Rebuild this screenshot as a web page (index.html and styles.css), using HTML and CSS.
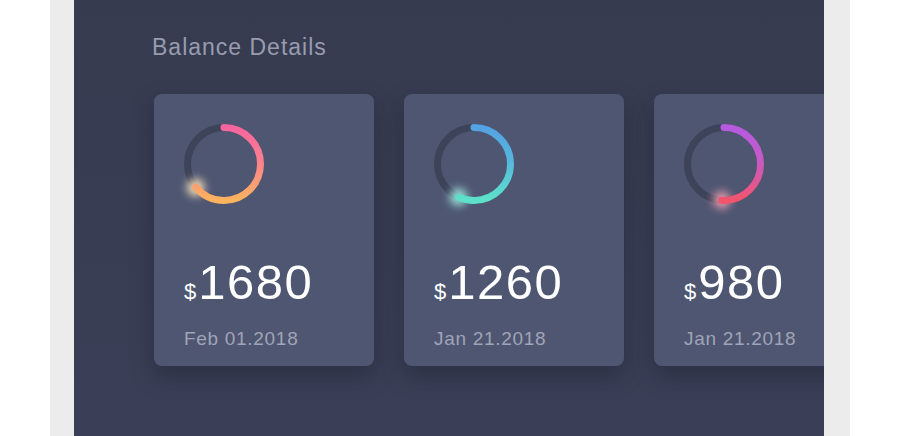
FILE: index.html
```html
<!DOCTYPE html>
<html lang="en">

<head>
    <meta charset="UTF-8">
    <meta name="viewport" content="width=device-width, initial-scale=1.0">
    <title>Balance Details</title>
    <link rel="stylesheet" href="styles.css">
</head>

<body>
    <div id="moldura">
        <div id="painel">
            <h2 id="titulo">Balance Details</h2>
            <div id="lista-cartoes">
                <div class="cartao">
                    <svg class="anel" width="80" height="80" viewBox="0 0 80 80">
                        <defs>
                            <linearGradient id="grad-rosa" x1="0" y1="0" x2="0" y2="1">
                                <stop offset="0" stop-color="#f6659f" />
                                <stop offset="0.45" stop-color="#f98090" />
                                <stop offset="1" stop-color="#fcb35e" />
                            </linearGradient>
                            <filter id="brilho" x="-200%" y="-200%" width="500%" height="500%">
                                <feGaussianBlur stdDeviation="4.5" />
                            </filter>
                        </defs>
                        <circle class="trilho" cx="40" cy="40" r="36.5" />
                        <circle cx="11.8" cy="63.5" r="9" fill="#fde7bd" opacity="0.9" filter="url(#brilho)" />
                        <path class="arco" d="M40 3.5 A36.5 36.5 0 1 1 40 76.5 A36.5 36.5 0 1 1 40 3.5" pathLength="100" stroke="url(#grad-rosa)" stroke-dasharray="64 100" />
                    </svg>
                    <div class="valor"><span class="moeda">$</span>1680</div>
                    <div class="data">Feb 01.2018</div>
                </div>
                <div class="cartao">
                    <svg class="anel" width="80" height="80" viewBox="0 0 80 80">
                        <defs>
                            <linearGradient id="grad-azul" x1="0" y1="0" x2="0" y2="1">
                                <stop offset="0" stop-color="#55a2e3" />
                                <stop offset="0.45" stop-color="#57b6dc" />
                                <stop offset="1" stop-color="#5de2c9" />
                            </linearGradient>
                        </defs>
                        <circle class="trilho" cx="40" cy="40" r="36.5" />
                        <circle cx="24.4" cy="73" r="9" fill="#a9f1e6" opacity="0.85" filter="url(#brilho)" />
                        <path class="arco" d="M40 3.5 A36.5 36.5 0 1 1 40 76.5 A36.5 36.5 0 1 1 40 3.5" pathLength="100" stroke="url(#grad-azul)" stroke-dasharray="57 100" />
                    </svg>
                    <div class="valor"><span class="moeda">$</span>1260</div>
                    <div class="data">Jan 21.2018</div>
                </div>
                <div class="cartao">
                    <svg class="anel" width="80" height="80" viewBox="0 0 80 80">
                        <defs>
                            <linearGradient id="grad-roxo" x1="0" y1="0" x2="0" y2="1">
                                <stop offset="0" stop-color="#b55be0" />
                                <stop offset="0.45" stop-color="#c65bc4" />
                                <stop offset="1" stop-color="#f2556c" />
                            </linearGradient>
                        </defs>
                        <circle class="trilho" cx="40" cy="40" r="36.5" />
                        <circle cx="37.7" cy="76" r="9" fill="#f6a2b4" opacity="0.85" filter="url(#brilho)" />
                        <path class="arco" d="M40 3.5 A36.5 36.5 0 1 1 40 76.5 A36.5 36.5 0 1 1 40 3.5" pathLength="100" stroke="url(#grad-roxo)" stroke-dasharray="51 100" />
                    </svg>
                    <div class="valor"><span class="moeda">$</span>980</div>
                    <div class="data">Jan 21.2018</div>
                </div>
            </div>
        </div>
    </div>
</body>

</html>
```

FILE: styles.css
```css
* {
    margin: 0px;
    padding: 0px;
    box-sizing: border-box;
}

body {
    background-color: #ffffff;
    font-family: "Liberation Sans", Arial, sans-serif;
    height: 436px;
    overflow: hidden;
}

div#moldura {
    margin: 0px 50px;
    height: 436px;
    background-color: #ececec;
    padding: 0px 26px 0px 24px;
}

div#painel {
    height: 100%;
    background: linear-gradient(180deg, #363b50 0%, #3a3f57 100%);
    padding: 33px 0px 0px 80px;
    overflow: hidden;
}

h2#titulo {
    font-size: 23px;
    line-height: 28px;
    font-weight: normal;
    letter-spacing: 1px;
    color: #989cae;
    margin-left: -2px;
}

div#lista-cartoes {
    display: flex;
    flex-direction: row;
    column-gap: 30px;
    margin-top: 33px;
}

div.cartao {
    flex-shrink: 0;
    width: 220px;
    height: 272px;
    background-color: #4e5672;
    border-radius: 8px;
    padding: 30px;
    box-shadow: 0px 10px 22px rgba(20, 23, 36, 0.35);
}

svg.anel {
    display: block;
    overflow: visible;
}

svg.anel .trilho {
    fill: none;
    stroke: #3d4359;
    stroke-width: 7;
}

svg.anel .arco {
    fill: none;
    stroke-width: 7;
    stroke-linecap: round;
}

div.valor {
    margin-top: 54px;
    font-size: 49px;
    line-height: 48px;
    letter-spacing: 1.5px;
    color: #ffffff;
}

span.moeda {
    font-size: 22px;
    letter-spacing: 0px;
    margin-right: 2px;
}

div.data {
    margin-top: 12px;
    font-size: 19px;
    line-height: 22px;
    letter-spacing: 0.7px;
    color: #a0a4b6;
}
```
